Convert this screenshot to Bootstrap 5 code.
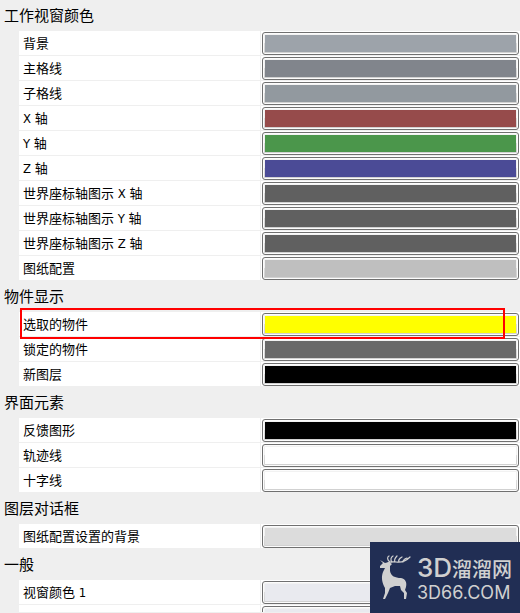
<!DOCTYPE html>
<html lang="zh-CN">
<head>
<meta charset="utf-8">
<meta name="viewport" content="width=device-width, initial-scale=1">
<title>颜色设置</title>
<link href="https://cdn.jsdelivr.net/npm/bootstrap@5.3.0/dist/css/bootstrap.min.css" rel="stylesheet">
<style>
body { background: #efefef; color: #000; font-family: "DejaVu Sans Condensed", "Noto Sans CJK SC", sans-serif; font-size: 13px; }
.settings { border-bottom: 1px solid #efefef; }
.group-title { height: 32px; padding: 0 4px; font-size: 15px; line-height: 34px; }
.group-title.first { height: 31px; line-height: 32px; }
.rows { display: grid; gap: 1px; margin-left: 19px; }
.setting { display: grid; grid-template-columns: 241px 1fr; gap: 1px; height: 24px; }
.setting > label { padding-left: 4px; line-height: 26px; height: 24px; background: #fff; }
.swatch-cell { padding: 1px 1px 0; background: #fff; }
.swatch-btn { height: 23px; padding: 2px; border: 1px solid #707070; border-radius: 3px; background: linear-gradient(#f2f2f2 0 45%, #ddd 50%, #cfcfcf); box-shadow: inset 0 0 0 1px #fcfcfc; }
.swatch-btn span { background: var(--c); }
.marker { top: -4px; left: 1px; right: 15px; height: 31px; border: 2px solid #f00; pointer-events: none; z-index: 1; }
.brand { width: 150px; height: 71px; background: #212e54; color: #d0d0d0; z-index: 2; }
.brand-deer { width: 32px; height: 46px; margin: 13px 0 0 9px; }
.brand-words { margin: 12px 0 0 6px; font-family: "Inter", "Noto Sans CJK SC", sans-serif; white-space: nowrap; }
.brand-name { font-size: 20px; line-height: 28px; font-weight: 500; }
.brand-name b { font-size: 26px; font-weight: 500; }
.brand-site { font-size: 18px; line-height: 18px; }
</style>
</head>
<body>
<main class="settings position-relative vh-100 overflow-hidden">
<section>
<h2 class="group-title first m-0 fw-normal">工作视窗颜色</h2>
<div class="rows">
<div class="setting"><label for="c1">背景</label><div class="swatch-cell"><button id="c1" type="button" class="swatch-btn d-flex w-100"><span class="w-100 h-100" style="--c:#9da3aa"></span></button></div></div>
<div class="setting"><label for="c2">主格线</label><div class="swatch-cell"><button id="c2" type="button" class="swatch-btn d-flex w-100"><span class="w-100 h-100" style="--c:#81858c"></span></button></div></div>
<div class="setting"><label for="c3">子格线</label><div class="swatch-cell"><button id="c3" type="button" class="swatch-btn d-flex w-100"><span class="w-100 h-100" style="--c:#92999f"></span></button></div></div>
<div class="setting"><label for="c4">X 轴</label><div class="swatch-cell"><button id="c4" type="button" class="swatch-btn d-flex w-100"><span class="w-100 h-100" style="--c:#964b4b"></span></button></div></div>
<div class="setting"><label for="c5">Y 轴</label><div class="swatch-cell"><button id="c5" type="button" class="swatch-btn d-flex w-100"><span class="w-100 h-100" style="--c:#4b964b"></span></button></div></div>
<div class="setting"><label for="c6">Z 轴</label><div class="swatch-cell"><button id="c6" type="button" class="swatch-btn d-flex w-100"><span class="w-100 h-100" style="--c:#4b4b96"></span></button></div></div>
<div class="setting"><label for="c7">世界座标轴图示 X 轴</label><div class="swatch-cell"><button id="c7" type="button" class="swatch-btn d-flex w-100"><span class="w-100 h-100" style="--c:#606060"></span></button></div></div>
<div class="setting"><label for="c8">世界座标轴图示 Y 轴</label><div class="swatch-cell"><button id="c8" type="button" class="swatch-btn d-flex w-100"><span class="w-100 h-100" style="--c:#606060"></span></button></div></div>
<div class="setting"><label for="c9">世界座标轴图示 Z 轴</label><div class="swatch-cell"><button id="c9" type="button" class="swatch-btn d-flex w-100"><span class="w-100 h-100" style="--c:#606060"></span></button></div></div>
<div class="setting"><label for="c10">图纸配置</label><div class="swatch-cell"><button id="c10" type="button" class="swatch-btn d-flex w-100"><span class="w-100 h-100" style="--c:#bfbfbf"></span></button></div></div>
</div>
</section>
<section>
<h2 class="group-title m-0 fw-normal">物件显示</h2>
<div class="rows">
<div class="setting position-relative"><label for="c11">选取的物件</label><div class="swatch-cell"><button id="c11" type="button" class="swatch-btn d-flex w-100"><span class="w-100 h-100" style="--c:#ffff00"></span></button></div><div class="marker position-absolute"></div></div>
<div class="setting"><label for="c12">锁定的物件</label><div class="swatch-cell"><button id="c12" type="button" class="swatch-btn d-flex w-100"><span class="w-100 h-100" style="--c:#696969"></span></button></div></div>
<div class="setting"><label for="c13">新图层</label><div class="swatch-cell"><button id="c13" type="button" class="swatch-btn d-flex w-100"><span class="w-100 h-100" style="--c:#000000"></span></button></div></div>
</div>
</section>
<section>
<h2 class="group-title m-0 fw-normal">界面元素</h2>
<div class="rows">
<div class="setting"><label for="c14">反馈图形</label><div class="swatch-cell"><button id="c14" type="button" class="swatch-btn d-flex w-100"><span class="w-100 h-100" style="--c:#000000"></span></button></div></div>
<div class="setting"><label for="c15">轨迹线</label><div class="swatch-cell"><button id="c15" type="button" class="swatch-btn d-flex w-100"><span class="w-100 h-100" style="--c:#ffffff"></span></button></div></div>
<div class="setting"><label for="c16">十字线</label><div class="swatch-cell"><button id="c16" type="button" class="swatch-btn d-flex w-100"><span class="w-100 h-100" style="--c:#ffffff"></span></button></div></div>
</div>
</section>
<section>
<h2 class="group-title m-0 fw-normal">图层对话框</h2>
<div class="rows">
<div class="setting"><label for="c17">图纸配置设置的背景</label><div class="swatch-cell"><button id="c17" type="button" class="swatch-btn d-flex w-100"><span class="w-100 h-100" style="--c:#dcdcdc"></span></button></div></div>
</div>
</section>
<section>
<h2 class="group-title m-0 fw-normal">一般</h2>
<div class="rows">
<div class="setting"><label for="c18">视窗颜色 1</label><div class="swatch-cell"><button id="c18" type="button" class="swatch-btn d-flex w-100"><span class="w-100 h-100" style="--c:#e9eaef"></span></button></div></div>
<div class="setting"><label for="c19"></label><div class="swatch-cell"><button id="c19" type="button" class="swatch-btn d-flex w-100" aria-label="颜色"><span class="w-100 h-100" style="--c:#e9eaef"></span></button></div></div>
</div>
</section>
</main>
<div class="brand position-fixed bottom-0 end-0 d-flex">
<svg class="brand-deer flex-shrink-0" viewBox="0 0 32 46" aria-hidden="true">
<path fill="currentColor" d="M1 5 L6 8 L10 7 L13 9 L11 11 L11 16 C12 21 16 23 22 23 C27 24 28 28 27 32 L26 35 L28 38 L27 44 L25 44 L25 38 L22 35 L21 31 L16 31 L11 33 L9 38 L6 44 L4 44 L6 38 L6 33 C3 28 2 22 4 17 L6 13 L1 13 L1 11 L4 8 Z"/>
<path fill="none" stroke="currentColor" stroke-width="1.2" stroke-linecap="round" d="M9 8 C12 6 13 7 17 7 C23 8 27 6 31 2 M11 7 C8 5 8 2 10 1 M13 7 C11 5 12 2 14 1 M16 7 C15 5 16 3 18 1 M20 7 C19 5 21 3 23 2 M24 7 C24 5 25 4 28 3"/>
</svg>
<div class="brand-words">
<div class="brand-name"><b>3D</b>溜溜网</div>
<div class="brand-site">3D66.COM</div>
</div>
</div>
<script src="https://cdn.jsdelivr.net/npm/bootstrap@5.3.0/dist/js/bootstrap.bundle.min.js"></script>
</body>
</html>
